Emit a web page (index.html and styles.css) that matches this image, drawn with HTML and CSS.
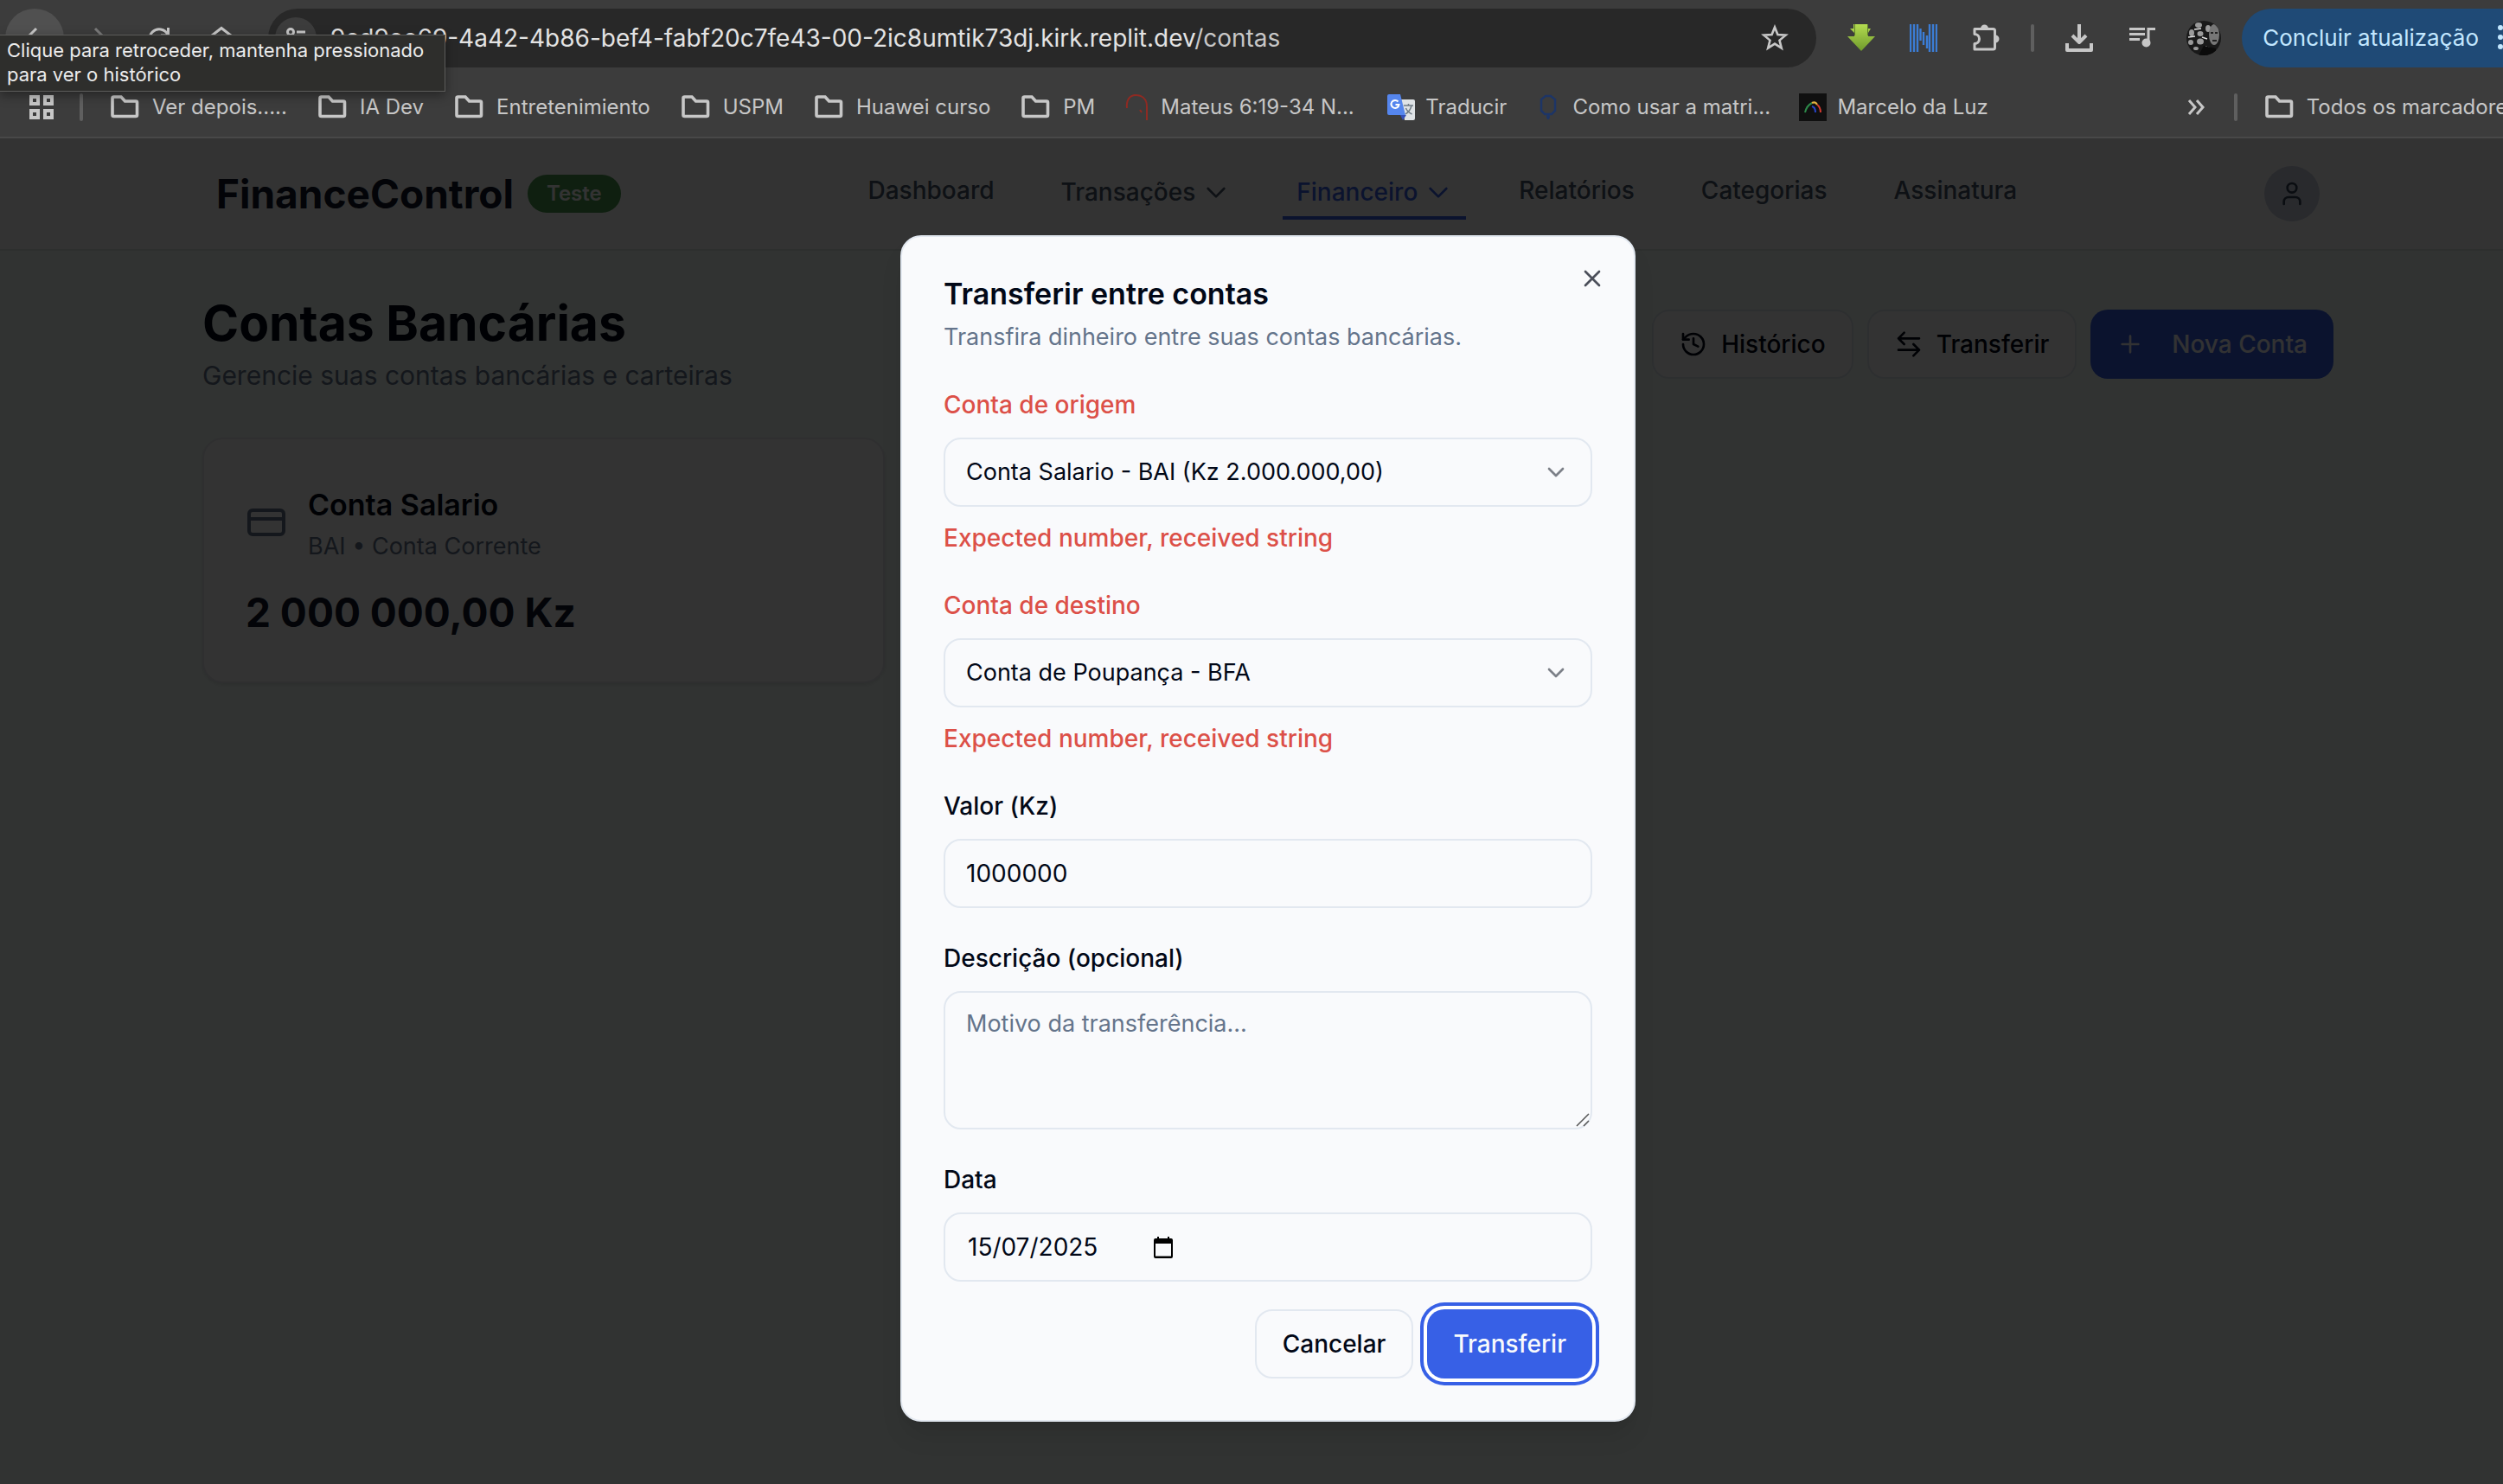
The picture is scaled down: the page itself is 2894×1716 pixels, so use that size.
FILE: index.html
```html
<!DOCTYPE html>
<html lang="pt">
<head>
<meta charset="utf-8">
<title>FinanceControl - Contas Bancárias</title>
<link rel="stylesheet" href="styles.css">
</head>
<body>
<svg class="sprite" aria-hidden="true">
  <symbol id="folder" viewBox="0 0 40 40"><path d="M6 29V9.500a1.500 1.500 0 0 1 1.500-1.500H16l4.500 5H33a1.500 1.500 0 0 1 1.500 1.500V29a1.500 1.500 0 0 1-1.500 1.500H7.500A1.500 1.500 0 0 1 6 29z" fill="none" stroke="currentColor" stroke-width="3.600"/></symbol>
  <symbol id="chevron" viewBox="0 0 24 24"><path d="m6 9 6 6 6-6" fill="none" stroke="currentColor" stroke-width="2" stroke-linecap="round" stroke-linejoin="round"/></symbol>
  <symbol id="chevron-wide" viewBox="0 0 24 24"><path d="M19 9l-7 7-7-7" fill="none" stroke="currentColor" stroke-width="2" stroke-linecap="round" stroke-linejoin="round"/></symbol>
</svg>

<header class="browser">
  <div class="toolbar">
    <button class="tool tool-back" aria-label="Voltar"><svg viewBox="0 0 32 32"><path d="M18 5 7 16l11 11M7 16h20" fill="none" stroke="currentColor" stroke-width="3"/></svg></button>
    <button class="tool tool-dim" aria-label="Avançar"><svg viewBox="0 0 32 32"><path d="M14 5l11 11-11 11M25 16H5" fill="none" stroke="currentColor" stroke-width="3"/></svg></button>
    <button class="tool" aria-label="Recarregar"><svg viewBox="0 0 32 32"><path d="M26 12A11 11 0 1 0 27 18M26.500 4v9H18" fill="none" stroke="currentColor" stroke-width="3"/></svg></button>
    <button class="tool" aria-label="Início"><svg viewBox="0 0 32 32"><path d="M5 29V13L16 4.500 27 13v16h-8v-9h-6v9z" fill="none" stroke="currentColor" stroke-width="3"/></svg></button>
    <div class="omnibox">
      <button class="site-info" aria-label="Informações do site"><svg viewBox="0 0 32 32"><g fill="none" stroke="currentColor" stroke-width="3"><circle cx="10" cy="9" r="3.500"/><path d="M17 9h10M5 22h10"/><circle cx="22" cy="22" r="3.500"/></g></svg></button>
      <span class="url">9cd9ee69-4a42-4b86-bef4-fabf20c7fe43-00-2ic8umtik73dj.kirk.replit.dev<span class="url-path">/contas</span></span>
      <button class="star" aria-label="Favoritar"><svg viewBox="0 0 32 32"><path d="M16 3.500l3.400 8.600 9.200.6-7.100 5.900 2.300 9L16 22.600l-7.800 5 2.300-9-7.100-5.900 9.200-.6z" fill="none" stroke="currentColor" stroke-width="2.600"/></svg></button>
    </div>
    <div class="extensions">
      <button aria-label="Downloader"><svg viewBox="0 0 32 32"><defs><linearGradient id="lime" x2="0" y2="1"><stop stop-color="#b4dc50"/><stop offset="1" stop-color="#6f9a2c"/></linearGradient></defs><path d="M9 0h14v5h4l-3 5v4h8L16 31 0 14h8v-4L3 5h4V0z" fill="url(#lime)"/><path d="M8.500 0v13M23.500 0v13" stroke="#5f7f2b"/></svg></button>
      <button aria-label="Leitor N"><svg viewBox="0 0 32 32"><path d="M1 0v32M5 0v32M9 0v32M23 0v32M27 0v32M31 0v32M12.500 5v14M16 9v15M20 13v15" stroke="#3b7dd6" stroke-width="2.400"/></svg></button>
      <button aria-label="Extensões"><svg viewBox="0 0 32 32"><path d="M3 5.500h21.500a2 2 0 0 1 2 2V27a2 2 0 0 1-2 2H3v-6.500a5.500 5.500 0 0 0 0-11z" fill="none" stroke="currentColor" stroke-width="3" stroke-linejoin="round"/><path d="M10 5a4.500 4.500 0 0 1 9 0zM27 12.500a4.500 4.500 0 0 1 0 9z" fill="currentColor"/></svg></button>
      <span class="divider"></span>
      <button aria-label="Downloads"><svg viewBox="0 0 32 32"><path d="M16 0v20M8 13l8 8 8-8M2 22v8h28v-8" fill="none" stroke="currentColor" stroke-width="4" stroke-linejoin="round"/></svg></button>
      <button aria-label="Mídia"><svg viewBox="0 0 32 32"><path d="M2 5.500h18M2 11.500h18M2 17.500h12M24 22V5.500h8" fill="none" stroke="currentColor" stroke-width="3"/><circle cx="21.500" cy="21.500" r="5" fill="currentColor"/></svg></button>
    </div>
    <button class="profile" aria-label="Perfil"><svg viewBox="0 0 40 40"><clipPath id="round"><circle cx="20" cy="20" r="20"/></clipPath><g clip-path="url(#round)"><path fill="#191919" d="M0 0h40v40H0z"/><g fill="#9a9a9a"><ellipse cx="14" cy="5" rx="4" ry="3"/><ellipse cx="6" cy="14" rx="3" ry="4"/><ellipse cx="16" cy="15" rx="3.500" ry="3"/><ellipse cx="25" cy="9" rx="3" ry="4"/><ellipse cx="5" cy="25" rx="3" ry="3"/><ellipse cx="16" cy="24" rx="4" ry="3.500"/><ellipse cx="11" cy="32" rx="3" ry="2"/></g><ellipse cx="32" cy="16" rx="6" ry="12" fill="#777"/><path d="M28 14h3M33 14h3M30 23h5" stroke="#222" stroke-width="2"/><path d="M2 19l8-1M18 19l6 2M22 30l8 3M9 10l8-1" stroke="#ddd" stroke-width="1.500"/><path d="M20 29l14 3v8H14z" fill="#0b0b0b"/></g></svg></button>
    <button class="update"><span>Concluir atualização</span><svg viewBox="0 0 6 32"><g fill="currentColor"><circle cx="3" cy="4" r="3"/><circle cx="3" cy="15" r="3"/><circle cx="3" cy="26" r="3"/></g></svg></button>
    <div class="tooltip" role="tooltip">Clique para retroceder, mantenha pressionado<br>para ver o histórico</div>
  </div>
  <nav class="bookmarks" aria-label="Favoritos">
    <button class="apps" aria-label="Apps"><svg viewBox="0 0 28 28"><path d="M2 2h8v8H2zM18 2h8v8h-8zM2 18h8v8H2zM18 18h8v8h-8z" fill="none" stroke="currentColor" stroke-width="4"/></svg></button>
    <span class="divider"></span>
    <div class="marks">
      <a href="#"><svg class="folder"><use href="#folder"/></svg>Ver depois.....</a>
      <a href="#"><svg class="folder"><use href="#folder"/></svg>IA Dev</a>
      <a href="#"><svg class="folder"><use href="#folder"/></svg>Entretenimiento</a>
      <a href="#"><svg class="folder"><use href="#folder"/></svg>USPM</a>
      <a href="#"><svg class="folder"><use href="#folder"/></svg>Huawei curso</a>
      <a href="#"><svg class="folder"><use href="#folder"/></svg>PM</a>
      <a href="#"><svg class="favicon" viewBox="0 0 32 32"><path d="M5 17C4 8 8 2 15 2s13 4 13 13v16M20 19l2 3" fill="none" stroke="#8f2a22" stroke-width="2"/></svg><span class="long">Mateus 6:19-34 N...</span></a>
      <a href="#"><svg class="favicon" viewBox="0 0 32 32"><path d="M16 7h14a2 2 0 0 1 2 2v20a2 2 0 0 1-2 2H20z" fill="#dfe3e6"/><path d="M2 1h13l6 24H2a2 2 0 0 1-2-2V3a2 2 0 0 1 2-2z" fill="#5586ee"/><path d="M15 25h7l-4 6z" fill="#3550b8"/><path d="M12.500 9.500A4.500 4.500 0 1 0 13.500 13H9.500" fill="none" stroke="#fff" stroke-width="2"/><path d="M19 14h11M24.500 12v2M28 14c-1 5-4 8-7 10M21.500 17c1 3 3 5 7 7" fill="none" stroke="#6f7b85" stroke-width="1.500"/></svg>Traducir</a>
      <a href="#"><svg class="favicon" viewBox="0 0 32 32"><path d="M13 3h6l5 4v13l-4 4h-8l-4-4V7zM16 24v6M14 27h4" fill="none" stroke="#1d3566" stroke-width="2.500"/></svg><span class="long">Como usar a matri...</span></a>
      <a href="#"><svg class="favicon" viewBox="0 0 32 32"><path fill="#101010" d="M0 0h32v32H0z"/><g fill="none" stroke-width="2"><path d="M7 22q2-8 8-11" stroke="#2d8a4a"/><path d="M15 11q4-2 6 2" stroke="#e0b040"/><path d="M21 13q4 3 4 9" stroke="#d43a30"/><path d="M15 15q4 1 4 7" stroke="#2744c8"/></g></svg>Marcelo da Luz</a>
    </div>
    <button class="more" aria-label="Mais favoritos"><svg viewBox="0 0 20 20"><path d="M2 2l7 8-7 8M11 2l7 8-7 8" fill="none" stroke="currentColor" stroke-width="3"/></svg></button>
    <span class="divider"></span>
    <a class="all" href="#"><svg class="folder"><use href="#folder"/></svg>Todos os marcadores</a>
  </nav>
</header>

<div class="app">
  <div class="page">
    <header class="site-header">
      <div class="site-bar">
        <div class="brand"><span class="brand-name">FinanceControl</span><span class="badge">Teste</span></div>
        <nav class="site-nav">
          <a href="#">Dashboard</a>
          <a class="menu" href="#">Transações<svg><use href="#chevron-wide"/></svg></a>
          <a class="menu current" href="#">Financeiro<svg><use href="#chevron-wide"/></svg></a>
          <a href="#">Relatórios</a>
          <a href="#">Categorias</a>
          <a href="#">Assinatura</a>
        </nav>
        <button class="user" aria-label="Conta do usuário"><svg viewBox="0 0 24 24"><path d="M19 21v-2a4 4 0 0 0-4-4H9a4 4 0 0 0-4 4v2"/><circle cx="12" cy="7" r="4"/></svg></button>
      </div>
    </header>
    <main class="content">
      <div class="heading">
        <div>
          <h1>Contas Bancárias</h1>
          <p>Gerencie suas contas bancárias e carteiras</p>
        </div>
        <div class="actions">
          <button class="btn outline"><svg viewBox="0 0 24 24"><path d="M3 12a9 9 0 1 0 9-9 9.750 9.750 0 0 0-6.740 2.740L3 8"/><path d="M3 3v5h5"/><path d="M12 7v5l4 2"/></svg>Histórico</button>
          <button class="btn outline"><svg viewBox="0 0 24 24"><path d="M8 2 3 7l5 5M3 7h18M16 22l5-5-5-5M21 17H3"/></svg>Transferir</button>
          <button class="btn primary wide"><svg viewBox="0 0 24 24"><path d="M5 12h14M12 5v14"/></svg>Nova Conta</button>
        </div>
      </div>
      <div class="cards">
        <article class="card">
          <div class="card-head">
            <svg viewBox="0 0 24 24"><rect width="20" height="14" x="2" y="5" rx="2"/><path d="M2 10h20"/></svg>
            <div>
              <h2>Conta Salario</h2>
              <p>BAI • Conta Corrente</p>
            </div>
          </div>
          <p class="amount">2 000 000,00 Kz</p>
        </article>
      </div>
    </main>
  </div>

  <div class="overlay">
    <form class="dialog" role="dialog" aria-labelledby="dialog-title">
      <button type="button" class="close" aria-label="Fechar"><svg viewBox="0 0 24 24"><path d="M18 6 6 18M6 6l12 12"/></svg></button>
      <div class="dialog-head">
        <h2 id="dialog-title">Transferir entre contas</h2>
        <p>Transfira dinheiro entre suas contas bancárias.</p>
      </div>
      <div class="field invalid">
        <label for="from">Conta de origem</label>
        <div class="select">
          <select id="from"><option>Conta Salario - BAI (Kz 2.000.000,00)</option></select>
          <svg><use href="#chevron"/></svg>
        </div>
        <p class="error">Expected number, received string</p>
      </div>
      <div class="field invalid">
        <label for="to">Conta de destino</label>
        <div class="select">
          <select id="to"><option>Conta de Poupança - BFA</option></select>
          <svg><use href="#chevron"/></svg>
        </div>
        <p class="error">Expected number, received string</p>
      </div>
      <div class="field">
        <label for="amount">Valor (Kz)</label>
        <input class="control" id="amount" type="text" value="1000000">
      </div>
      <div class="field">
        <label for="note">Descrição (opcional)</label>
        <div class="note">
          <textarea class="control" id="note" placeholder="Motivo da transferência..."></textarea>
          <svg viewBox="0 0 16 16"><path d="M1 15 15 1M9 15l6-6" stroke="#555" stroke-width="1.500"/></svg>
        </div>
      </div>
      <div class="field">
        <label for="date">Data</label>
        <div class="control date">
          <input id="date" type="text" value="15/07/2025">
          <button type="button" aria-label="Abrir calendário"><svg viewBox="0 0 24 26"><path d="M3 3h18a2 2 0 0 1 2 2v19a2 2 0 0 1-2 2H3a2 2 0 0 1-2-2V5a2 2 0 0 1 2-2zM3 9v14.500h18V9z" fill-rule="evenodd"/><path d="M5 1h2v3H5zM17 1h2v3h-2z"/></svg></button>
        </div>
      </div>
      <div class="dialog-actions">
        <button type="button" class="btn outline">Cancelar</button>
        <button type="submit" class="btn primary focused">Transferir</button>
      </div>
    </form>
  </div>
</div>
</body>
</html>
```
FILE: styles.css
```css
*, *::before, *::after { box-sizing: border-box; }

body {
  margin: 0;
  min-height: 100vh;
  display: flex;
  flex-direction: column;
  overflow-x: hidden;
  font-family: Inter, "Liberation Sans", sans-serif;
  font-size: 28px;
  line-height: 40px;
  color: #020817;
}

h1, h2, p { margin: 0; }
a { color: inherit; text-decoration: none; }
button, input, select, textarea { font: inherit; color: inherit; }
button { padding: 0; border: 0; background: none; }
svg { display: block; flex: none; }
.sprite { position: absolute; width: 0; height: 0; }

/* Browser window */
.browser {
  background: #3c3c3c;
  border-bottom: 2px solid #484848;
  color: #c7c7c7;
  overflow: hidden;
}

.divider {
  flex: none;
  width: 4px;
  height: 32px;
  border-radius: 2px;
  background: #5f5f5f;
}

.toolbar {
  position: relative;
  display: flex;
  align-items: center;
  height: 88px;
  padding-left: 6px;
  white-space: nowrap;
}

.tool {
  flex: none;
  display: grid;
  place-items: center;
  width: 68px;
  height: 68px;
  margin-right: 4px;
  border-radius: 50%;
}
.tool svg { width: 32px; height: 32px; }
.tool-back { background: #505050; }
.tool-dim { color: #7a7a7a; }

.omnibox {
  flex: 1;
  display: flex;
  align-items: center;
  height: 68px;
  margin-left: 16px;
  padding: 0 32px 0 8px;
  border-radius: 34px;
  background: #282828;
}
.site-info {
  display: grid;
  place-items: center;
  width: 48px;
  height: 48px;
  margin-right: 16px;
  border-radius: 50%;
  background: #3c3c3c;
}
.site-info svg, .star svg { width: 32px; height: 32px; }
.url { flex: 1; color: #e3e3e3; }
.url-path { color: #c7c7c7; }

.extensions {
  display: flex;
  align-items: center;
  gap: 40px;
  margin: 0 36px;
}
.extensions svg { width: 32px; height: 32px; }
.extensions .divider { margin: 0 -4px; }

.profile { margin-right: 24px; }
.profile svg { width: 40px; height: 40px; }

.update {
  display: flex;
  align-items: center;
  gap: 22px;
  height: 68px;
  padding-left: 24px;
  border-radius: 34px 0 0 34px;
  background: #1f4a76;
  color: #c2e7ff;
  font-size: 26px;
}
.update svg { width: 6px; height: 32px; }

.tooltip {
  position: absolute;
  top: 40px;
  left: 0;
  z-index: 2;
  padding: 3px 24px 5px 8px;
  border: 1px solid #5c5c5a;
  border-left: 0;
  background: #2e2e2c;
  box-shadow: 0 4px 12px rgba(0, 0, 0, 0.4);
  color: #ececec;
  font-size: 22px;
  line-height: 28px;
}

.bookmarks {
  display: flex;
  align-items: center;
  height: 70px;
  padding: 2px 0 0 34px;
  font-size: 24px;
  line-height: 32px;
  white-space: nowrap;
}
.apps { margin-right: 30px; }
.apps svg { width: 28px; height: 28px; }
.marks {
  flex: 1;
  display: flex;
  gap: 32px;
  margin-left: 28px;
}
.marks a, .all {
  display: flex;
  align-items: center;
  gap: 12px;
}
.folder { width: 40px; height: 40px; }
.favicon { width: 32px; height: 32px; }
.long { min-width: 230px; }
.more { margin-right: 34px; }
.more svg { width: 20px; height: 20px; }
.all { margin: 0 -18px 0 28px; }

/* Application */
.app {
  flex: 1;
  display: grid;
}
.page, .overlay {
  grid-area: 1 / 1;
  padding-left: 38px;
}
.page { background: #f5fffa; }

.site-header {
  margin-left: -38px;
  padding-left: 38px;
  background: #fff;
  border-bottom: 2px solid #e2e8e6;
}
.site-bar {
  display: flex;
  align-items: center;
  justify-content: space-between;
  max-width: 2432px;
  height: 128px;
  margin: 0 auto;
}
.brand {
  display: flex;
  align-items: center;
  gap: 16px;
}
.brand-name {
  font-size: 46px;
  font-weight: 700;
  line-height: 64px;
  color: #0f172a;
}
.badge {
  padding: 4px 22px;
  border-radius: 22px;
  background: #4c9b50;
  color: #fff;
  font-size: 24px;
  font-weight: 600;
  line-height: 36px;
}

.site-nav {
  display: flex;
  align-items: flex-start;
  gap: 45px;
  color: #475569;
  font-weight: 500;
}
.site-nav a {
  padding: 8px 16px;
  border-bottom: 4px solid transparent;
  line-height: 36px;
}
.site-nav .menu {
  display: flex;
  align-items: center;
  gap: 8px;
  line-height: 40px;
}
.menu svg { width: 32px; height: 32px; }
.site-nav .current {
  border-color: #3760e6;
  color: #3760e6;
}

.user {
  display: grid;
  place-items: center;
  width: 64px;
  height: 64px;
  border-radius: 50%;
  background: #cbd2e1;
  color: #334155;
}
.user svg { width: 32px; height: 32px; }

.user svg, .btn svg, .card svg, .close svg {
  fill: none;
  stroke: currentColor;
  stroke-width: 2;
  stroke-linecap: round;
  stroke-linejoin: round;
}

.content {
  max-width: 2464px;
  margin: 0 auto;
  padding: 48px 0;
}
.heading {
  display: flex;
  align-items: center;
  justify-content: space-between;
  margin-bottom: 48px;
}
h1 {
  font-size: 57px;
  font-weight: 700;
  line-height: 72px;
}
.heading p {
  color: #64748b;
  font-size: 30px;
  line-height: 48px;
}
.actions {
  display: flex;
  gap: 16px;
}

.btn {
  display: flex;
  align-items: center;
  gap: 16px;
  height: 80px;
  padding: 0 30px;
  border-radius: 20px;
  font-weight: 500;
}
.btn svg { width: 32px; height: 32px; }
.outline {
  border: 2px solid #e2e8f0;
  background: #fff;
}
.primary {
  background: #3760e6;
  color: #f8fafc;
}
.wide { gap: 32px; }

.cards {
  display: grid;
  grid-template-columns: repeat(3, 1fr);
  gap: 48px;
}
.card {
  padding: 48px;
  border: 2px solid #e8ebf0;
  border-radius: 24px;
  background: #fff;
  box-shadow: 0 2px 4px rgba(0, 0, 0, 0.1);
}
.card-head {
  display: flex;
  align-items: center;
  gap: 24px;
  margin-bottom: 24px;
  color: #64748b;
  font-size: 27px;
}
.card svg { width: 48px; height: 48px; }
.card h2 {
  color: #020817;
  font-size: 34px;
  font-weight: 600;
  line-height: 56px;
}
.amount {
  color: #0f172a;
  font-size: 46px;
  font-weight: 700;
  line-height: 64px;
}

/* Transfer dialog */
.overlay {
  z-index: 1;
  display: grid;
  justify-items: center;
  align-items: start;
  padding-top: 112px;
  padding-bottom: 72px;
  background: rgba(0, 0, 0, 0.8);
}
.dialog {
  position: relative;
  width: 100%;
  max-width: 850px;
  display: grid;
  gap: 32px;
  padding: 48px;
  border: 2px solid #e2e8f0;
  border-radius: 24px;
  background: #f9fafc;
  box-shadow: 0 20px 30px -6px rgba(0, 0, 0, 0.1), 0 8px 12px -8px rgba(0, 0, 0, 0.1);
}
.close {
  position: absolute;
  top: 32px;
  right: 32px;
  opacity: 0.7;
}
.close svg { width: 32px; height: 32px; }

.dialog-head { display: grid; gap: 12px; }
.dialog-head h2 {
  font-size: 34px;
  font-weight: 600;
  line-height: 36px;
}
.dialog-head p { color: #64748b; font-size: 27px; }

.field label {
  display: block;
  margin-bottom: 12px;
  font-weight: 500;
  line-height: 52px;
}
.invalid label, .error { color: #dc5048; }
.error {
  margin-top: 16px;
  font-weight: 500;
}

.control, .select select {
  display: block;
  width: 100%;
  height: 80px;
  padding: 0 24px;
  border: 2px solid #e2e8f0;
  border-radius: 20px;
  background: #f9fafc;
  outline: 0;
}
.select {
  display: grid;
  align-items: center;
}
.select > * { grid-area: 1 / 1; }
.select select { appearance: none; font-size: 27px; }
.select svg {
  justify-self: end;
  width: 32px;
  height: 32px;
  margin-right: 26px;
  opacity: 0.5;
  pointer-events: none;
}

.note { position: relative; }
textarea.control {
  height: 160px;
  padding: 16px 24px;
  resize: none;
  font-size: 27px;
}
textarea::placeholder { color: #64748b; opacity: 1; }
.note svg {
  position: absolute;
  right: 3px;
  bottom: 3px;
  width: 16px;
  height: 16px;
}

.date {
  display: flex;
  align-items: center;
  padding-left: 26px;
}
.date input {
  width: 214px;
  padding: 0;
  border: 0;
  outline: 0;
  background: none;
}
.date svg { width: 24px; height: 26px; }

.dialog-actions {
  display: flex;
  justify-content: flex-end;
  gap: 16px;
}
.dialog-actions .outline { background: #f9fafc; }
.focused {
  box-shadow: 0 0 0 4px #fff, 0 0 0 8px #3760e6;
}
```
